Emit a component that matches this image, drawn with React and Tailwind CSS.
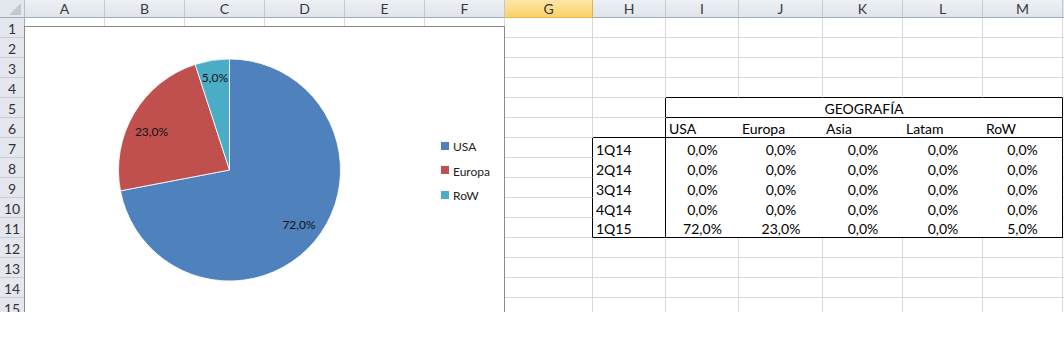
import React from 'react';

const cols = [
  { k: 'A', w: 'w-[80px]' },
  { k: 'B', w: 'w-[80px]' },
  { k: 'C', w: 'w-[80px]' },
  { k: 'D', w: 'w-[80px]' },
  { k: 'E', w: 'w-[80px]' },
  { k: 'F', w: 'w-[80px]' },
  { k: 'G', w: 'w-[88px]' },
  { k: 'H', w: 'w-[73px]' },
  { k: 'I', w: 'w-[73px]' },
  { k: 'J', w: 'w-[84px]' },
  { k: 'K', w: 'w-[80px]' },
  { k: 'L', w: 'w-[80px]' },
  { k: 'M', w: 'w-[80px]' },
];

const R = { g: 'border-r border-r-[#d8d8d8]', k: 'border-r border-r-black', w: '' };
const B = { g: 'border-b border-b-[#d8d8d8]', k: 'border-b border-b-black', w: '' };

const quarters = ['1Q14', '2Q14', '3Q14', '4Q14', '1Q15'];
const values = [
  ['0,0%', '0,0%', '0,0%', '0,0%', '0,0%'],
  ['0,0%', '0,0%', '0,0%', '0,0%', '0,0%'],
  ['0,0%', '0,0%', '0,0%', '0,0%', '0,0%'],
  ['0,0%', '0,0%', '0,0%', '0,0%', '0,0%'],
  ['72,0%', '23,0%', '0,0%', '0,0%', '5,0%'],
];
const regions = ['USA', 'Europa', 'Asia', 'Latam', 'RoW'];
const dataCols = ['I', 'J', 'K', 'L', 'M'];

// cell overrides for the GEOGRAFÍA table
const cellFor = (row, col) => {
  const c = { r: 'g', b: 'g', text: '', align: 'left' };
  const di = dataCols.indexOf(col);
  if (row === 4 && di >= 0) c.b = 'k';
  if ((row === 5 || row === 6) && col === 'H') c.r = 'k';
  if (row === 6) {
    if (col === 'H') c.b = 'k';
    if (di >= 0) {
      c.text = regions[di];
      c.b = 'k';
      c.r = col === 'M' ? 'k' : 'w';
    }
  }
  if (row >= 7 && row <= 11) {
    const q = row - 7;
    const bottom = row === 11 ? 'k' : 'w';
    if (col === 'G') c.r = 'k';
    if (col === 'H') {
      c.r = 'k';
      c.b = bottom;
      c.text = quarters[q];
    }
    if (di >= 0) {
      c.r = col === 'M' ? 'k' : 'w';
      c.b = bottom;
      c.text = values[q][di];
      c.align = 'center';
    }
  }
  return c;
};

const Cell = ({ w, r, b, text, align }) => (
  <div
    className={`${w} ${R[r]} ${B[b]} h-full shrink-0 flex items-end whitespace-nowrap leading-[17px] text-[14px] text-black ${
      align === 'center' ? 'justify-center' : 'justify-start pl-[3px]'
    }`}
  >
    {text}
  </div>
);

const SheetRow = ({ n }) => {
  const cells = [];
  for (let i = 0; i < cols.length; i++) {
    const col = cols[i];
    if (n === 5 && col.k === 'I') {
      cells.push(
        <div
          key="merged"
          className="w-[397px] h-full shrink-0 border-r border-b border-r-black border-b-black flex items-end justify-center leading-[17px] text-[14px] text-black"
        >
          GEOGRAFÍA
        </div>
      );
      i += 4;
      continue;
    }
    const c = cellFor(n, col.k);
    cells.push(<Cell key={col.k} w={col.w} {...c} />);
  }
  return (
    <div className="flex h-[20px]">
      <div className="w-[25px] h-full shrink-0 border-r border-b border-r-[#9eabbb] border-b-[#c6ccd4] bg-[#e4e8ee] flex items-end justify-center leading-[17px] text-[14px] text-[#333]">
        {n}
      </div>
      {cells}
      <div className="flex-1 h-full border-b border-b-[#d8d8d8]" />
    </div>
  );
};

const HeaderRow = () => (
  <div className="flex h-[18px]">
    <div className="relative w-[25px] h-full shrink-0 border-r border-b border-r-[#b7bfc9] border-b-[#9eabbb] bg-[#e4e8ee]">
      <svg className="absolute right-[3px] bottom-[2px]" width="12" height="12" viewBox="0 0 12 12">
        <path d="M12 0 L12 12 L0 12 Z" fill="#c2c8d0" />
      </svg>
    </div>
    {cols.map((c) =>
      c.k === 'G' ? (
        <div
          key={c.k}
          className={`${c.w} h-full shrink-0 border-r border-b border-r-[#e3b04b] border-b-[#f0b23c] bg-linear-to-b from-[#fde7a6] to-[#f8d26a] flex items-center justify-center text-[14px] leading-none text-[#333]`}
        >
          {c.k}
        </div>
      ) : (
        <div
          key={c.k}
          className={`${c.w} h-full shrink-0 border-r border-b border-r-[#c3c9d1] border-b-[#9eabbb] bg-linear-to-b from-[#edf0f4] to-[#e0e5eb] flex items-center justify-center text-[14px] leading-none text-[#3a3a3a]`}
        >
          {c.k}
        </div>
      )
    )}
    <div className="flex-1 h-full border-b border-b-[#9eabbb] bg-[#e0e5eb]" />
  </div>
);

const cx = 204.5;
const cy = 143;
const rad = 111;

const PieChart = () => (
  <div className="absolute left-[24px] top-[26px] w-[481px] h-[300px] border border-[#8a8a8a] bg-white">
    <svg width="479" height="298" viewBox="0 0 479 298" className="block">
      <path
        d={`M${cx} ${cy} L${cx} ${cy - rad} A${rad} ${rad} 0 1 1 95.46 163.8 Z`}
        fill="#4f81bd"
        stroke="#ffffff"
        strokeWidth="0.8"
      />
      <path
        d={`M${cx} ${cy} L95.46 163.8 A${rad} ${rad} 0 0 1 170.2 37.43 Z`}
        fill="#c0504d"
        stroke="#ffffff"
        strokeWidth="0.8"
      />
      <path
        d={`M${cx} ${cy} L170.2 37.43 A${rad} ${rad} 0 0 1 ${cx} ${cy - rad} Z`}
        fill="#4bacc6"
        stroke="#ffffff"
        strokeWidth="0.8"
      />
      <g fontFamily="Lato, 'Open Sans', sans-serif" fontSize="12" fill="#111">
        <text x="190" y="55" textAnchor="middle">5,0%</text>
        <text x="126.5" y="109" textAnchor="middle">23,0%</text>
        <text x="274" y="202" textAnchor="middle">72,0%</text>
      </g>
      <g fontFamily="Lato, 'Open Sans', sans-serif" fontSize="12" fill="#222">
        <rect x="416" y="115" width="8" height="8" fill="#4f81bd" />
        <text x="428" y="124">USA</text>
        <rect x="416" y="139" width="8" height="8" fill="#c0504d" />
        <text x="428" y="149">Europa</text>
        <rect x="416" y="164" width="8" height="8" fill="#4bacc6" />
        <text x="428" y="173">RoW</text>
      </g>
    </svg>
  </div>
);

const App = () => {
  const rows = Array.from({ length: 15 }, (_, i) => i + 1);
  return (
    <div className="w-[1064px] h-[346px] bg-white overflow-hidden" style={{ fontFamily: 'Lato, "Open Sans", sans-serif' }}>
      <div className="relative h-[312px] overflow-hidden">
        <HeaderRow />
        {rows.map((n) => (
          <SheetRow key={n} n={n} />
        ))}
        <PieChart />
      </div>
    </div>
  );
};

export default App;
